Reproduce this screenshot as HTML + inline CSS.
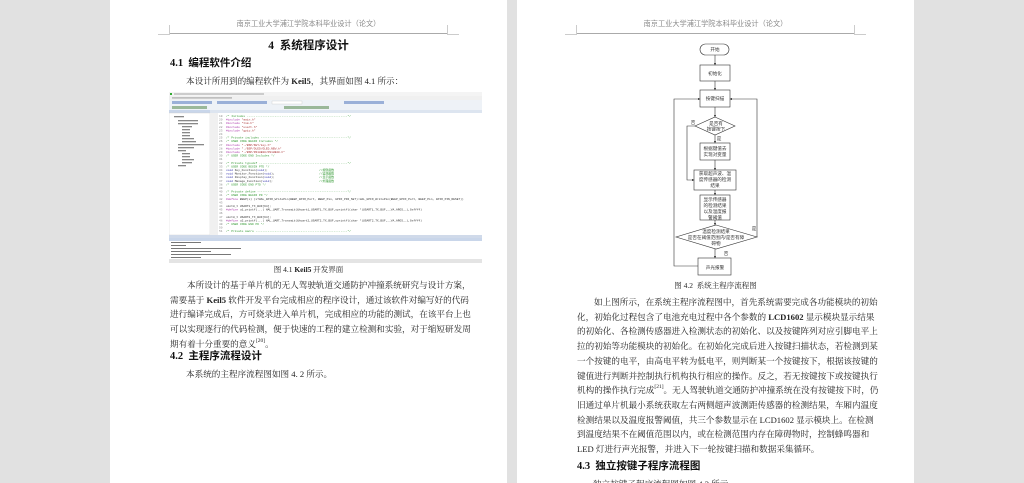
<!DOCTYPE html>
<html><head><meta charset="utf-8"><style>
*{margin:0;padding:0;box-sizing:border-box}
body{width:1024px;height:483px;overflow:hidden;background:#e1e1e1;position:relative;font-family:"Liberation Serif","Noto Serif CJK SC",serif;color:#222}
.page{position:absolute;top:0;width:397px;height:483px;background:#fff;overflow:hidden}
.hd{position:absolute;top:19px;left:60px;width:277px;text-align:center;font-size:7.2px;color:#8a8a8a;font-family:"Liberation Sans","Noto Sans CJK SC",sans-serif}
.hl{position:absolute;top:33px;left:60px;width:277px;height:1px;background:#aaa}
.cm{position:absolute;width:12px;height:10px;border-color:#ccc;border-style:solid;border-width:0}
.t{position:absolute;font-size:9px;line-height:14.7px;color:#222;white-space:nowrap}
.p{position:absolute;left:60px;width:277px;font-size:8.6px;line-height:14.7px;text-align:justify;text-align-last:justify;color:#222}
.p span{display:block;white-space:nowrap}
.b{font-weight:bold;color:#111;font-family:"Liberation Serif","Noto Sans CJK SC",serif}
sup{font-size:5.5px;vertical-align:top;line-height:8px}
</style></head><body>

<div class="page" style="left:110px">
 <div class="hd">南京工业大学浦江学院本科毕业设计（论文）</div>
 <div class="hl"></div>
 <div class="cm" style="left:48px;top:25px;border-right-width:1px;border-bottom-width:1px"></div>
 <div class="cm" style="left:337px;top:25px;border-left-width:1px;border-bottom-width:1px"></div>
 <div class="t b" style="left:0;width:397px;text-align:center;top:39px;font-size:11.5px">4&nbsp; 系统程序设计</div>
 <div class="t b" style="left:60px;top:57px;font-size:10.5px">4.1&nbsp; 编程软件介绍</div>
 <div class="t" style="left:76px;top:74px;font-size:8.6px">本设计所用到的编程软件为 <b>Keil5</b>，其界面如图 4.1 所示：</div>
 <svg style="position:absolute;left:59px;top:92px" width="313" height="171" viewBox="0 0 313 171">
  <rect width="313" height="171" fill="#fff"/>
  <rect x="0" y="0" width="313" height="4" fill="#f4f4f4"/>
  <rect x="1" y="1" width="2" height="2" fill="#3a3"/>
  <rect x="5" y="1.3" width="90" height="1.4" fill="#bbb"/>
  <rect x="0" y="4" width="313" height="4" fill="#f0f0f0"/>
  <g fill="#aaa"><rect x="3" y="5.3" width="60" height="1.2"/></g>
  <rect x="0" y="8" width="313" height="5" fill="#eef2f7"/>
  <g fill="#9ab0d8"><rect x="3" y="9" width="40" height="3"/><rect x="48" y="9" width="50" height="3"/><rect x="175" y="9" width="40" height="3"/></g>
  <rect x="103" y="9" width="30" height="3" fill="#fff" stroke="#bbb" stroke-width=".3"/>
  <rect x="0" y="13" width="313" height="5" fill="#eef2f7"/>
  <g fill="#9ab89a"><rect x="3" y="14" width="35" height="3"/><rect x="115" y="14" width="45" height="3"/></g>
  <rect x="0" y="18" width="41" height="3" fill="#c9d6ea"/>
  <rect x="41" y="18" width="272" height="3" fill="#dde5f0"/>
  <rect x="0" y="21" width="41" height="122" fill="#fff" stroke="#ccc" stroke-width=".4"/>
  <g fill="#888">
   <rect x="5" y="24" width="10" height="1.3"/><rect x="9" y="28" width="20" height="1.3"/><rect x="9" y="31" width="20" height="1.3"/>
   <rect x="13" y="34" width="10" height="1.3"/><rect x="13" y="37" width="8" height="1.3"/><rect x="13" y="40" width="8" height="1.3"/><rect x="13" y="43" width="8" height="1.3"/><rect x="13" y="46" width="12" height="1.3"/><rect x="13" y="49" width="14" height="1.3"/>
   <rect x="9" y="52" width="26" height="1.3"/><rect x="9" y="55" width="16" height="1.3"/><rect x="9" y="58" width="8" height="1.3"/>
   <rect x="13" y="61" width="8" height="1.3"/><rect x="13" y="64" width="8" height="1.3"/><rect x="13" y="67" width="12" height="1.3"/><rect x="13" y="70" width="10" height="1.3"/><rect x="9" y="73" width="8" height="1.3"/>
  </g>
  <rect x="41" y="21" width="8" height="122" fill="#f0f0f0"/>
  <g font-family="Liberation Mono" font-size="2.9" >
   <g fill="#888">
    <text x="50" y="25">19</text><text x="50" y="28.6">20</text><text x="50" y="32.2">21</text><text x="50" y="35.8">22</text><text x="50" y="39.4">23</text><text x="50" y="43">24</text><text x="50" y="46.6">25</text><text x="50" y="50.2">26</text><text x="50" y="53.8">27</text><text x="50" y="57.4">28</text><text x="50" y="61">29</text><text x="50" y="64.6">30</text><text x="50" y="68.2">31</text><text x="50" y="71.8">32</text><text x="50" y="75.4">33</text><text x="50" y="79">34</text><text x="50" y="82.6">35</text><text x="50" y="86.2">36</text><text x="50" y="89.8">37</text><text x="50" y="93.4">38</text><text x="50" y="97">39</text><text x="50" y="100.6">40</text><text x="50" y="104.2">41</text><text x="50" y="107.8">42</text><text x="50" y="111.4">43</text><text x="50" y="115">44</text><text x="50" y="118.6">45</text><text x="50" y="122.2">46</text><text x="50" y="125.8">47</text><text x="50" y="129.4">48</text><text x="50" y="133">49</text><text x="50" y="136.6">50</text><text x="50" y="140.2">51</text>
   </g>
   <text x="57" y="25" fill="#393">/* Includes ----------------------------------------------------------*/</text>
   <text x="57" y="28.6" fill="#a3a">#include <tspan fill="#a33">"main.h"</tspan></text>
   <text x="57" y="32.2" fill="#a3a">#include <tspan fill="#a33">"tim.h"</tspan></text>
   <text x="57" y="35.8" fill="#a3a">#include <tspan fill="#a33">"usart.h"</tspan></text>
   <text x="57" y="39.4" fill="#a3a">#include <tspan fill="#a33">"gpio.h"</tspan></text>
   <text x="57" y="46.6" fill="#393">/* Private includes --------------------------------------------------*/</text>
   <text x="57" y="50.2" fill="#393">/* USER CODE BEGIN Includes */</text>
   <text x="57" y="53.8" fill="#a3a">#include <tspan fill="#a33">"./BSP/KEY/key.h"</tspan></text>
   <text x="57" y="57.4" fill="#a3a">#include <tspan fill="#a33">"./BSP/OLED/OLED_NEW.h"</tspan></text>
   <text x="57" y="61" fill="#a3a">#include <tspan fill="#a33">"./BSP/DS18B20/DS18B20.h"</tspan></text>
   <text x="57" y="64.6" fill="#393">/* USER CODE END Includes */</text>
   <text x="57" y="71.8" fill="#393">/* Private typedef ---------------------------------------------------*/</text>
   <text x="57" y="75.4" fill="#393">/* USER CODE BEGIN PTD */</text>
   <text x="57" y="79" fill="#33a">void <tspan fill="#333">Key_Function(</tspan>void<tspan fill="#333">);</tspan><tspan fill="#393" x="150">//按键函数</tspan></text>
   <text x="57" y="82.6" fill="#33a">void <tspan fill="#333">Monitor_Function(</tspan>void<tspan fill="#333">);</tspan><tspan fill="#393" x="150">//监测函数</tspan></text>
   <text x="57" y="86.2" fill="#33a">void <tspan fill="#333">Display_Function(</tspan>void<tspan fill="#333">);</tspan><tspan fill="#393" x="150">//显示函数</tspan></text>
   <text x="57" y="89.8" fill="#33a">void <tspan fill="#333">Manage_Function(</tspan>void<tspan fill="#333">);</tspan><tspan fill="#393" x="150">//处理函数</tspan></text>
   <text x="57" y="93.4" fill="#393">/* USER CODE END PTD */</text>
   <text x="57" y="100.6" fill="#393">/* Private define ----------------------------------------------------*/</text>
   <text x="57" y="104.2" fill="#393">/* USER CODE BEGIN PD */</text>
   <text x="57" y="107.8" fill="#a3a">#define <tspan fill="#333">BEEP(x)  (x?HAL_GPIO_WritePin(BEEP_GPIO_Port, BEEP_Pin, GPIO_PIN_SET):HAL_GPIO_WritePin(BEEP_GPIO_Port, BEEP_Pin, GPIO_PIN_RESET))</tspan></text>
   <text x="57" y="115" fill="#333">uint8_t USART1_TX_BUF[64];</text>
   <text x="57" y="118.6" fill="#a3a">#define <tspan fill="#333">u1_printf(...)  HAL_UART_Transmit(&amp;huart1,USART1_TX_BUF,sprintf((char *)USART1_TX_BUF,__VA_ARGS__),0xffff)</tspan></text>
   <text x="57" y="125.8" fill="#333">uint8_t USART2_TX_BUF[64];</text>
   <text x="57" y="129.4" fill="#a3a">#define <tspan fill="#333">u2_printf(...)  HAL_UART_Transmit(&amp;huart2,USART2_TX_BUF,sprintf((char *)USART2_TX_BUF,__VA_ARGS__),0xffff)</tspan></text>
   <text x="57" y="133" fill="#393">/* USER CODE END PD */</text>
   <text x="57" y="140.2" fill="#393">/* Private macro -----------------------------------------------------*/</text>
  </g>
  <rect x="0" y="143" width="313" height="3" fill="#d0daea"/>
  <rect x="0" y="146" width="313" height="3" fill="#c9d6ea"/>
  <g fill="#777"><rect x="2" y="150" width="30" height="1"/><rect x="2" y="153" width="15" height="1"/><rect x="2" y="156" width="70" height="1"/><rect x="2" y="159" width="40" height="1"/><rect x="2" y="162" width="60" height="1"/><rect x="2" y="165" width="30" height="1"/></g>
  <rect x="0" y="167" width="313" height="4" fill="#e4e4e4"/>
 </svg>
 <div class="t" style="left:0;width:397px;text-align:center;top:263px;font-size:7.5px">图 4.1 <b>Keil5</b> 开发界面</div>
 <div class="p" style="top:278px">
  <span style="text-indent:17px">本所设计的基于单片机的无人驾驶轨道交通防护冲撞系统研究与设计方案，</span>
  <span>需要基于 <b>Keil5</b> 软件开发平台完成相应的程序设计，通过该软件对编写好的代码</span>
  <span>进行编译完成后，方可烧录进入单片机，完成相应的功能的测试，在该平台上也</span>
  <span>可以实现逐行的代码检测，便于快速的工程的建立检测和实验，对于缩短研发周</span>
  <span style="text-align-last:left">期有着十分重要的意义<sup>[20]</sup>。</span>
 </div>
 <div class="t b" style="left:60px;top:350px;font-size:10.5px">4.2&nbsp; 主程序流程设计</div>
 <div class="t" style="left:76px;top:367px;font-size:8.6px">本系统的主程序流程图如图 4. 2 所示。</div>
</div>

<div class="page" style="left:517px">
 <div class="hd">南京工业大学浦江学院本科毕业设计（论文）</div>
 <div class="hl"></div>
 <div class="cm" style="left:48px;top:25px;border-right-width:1px;border-bottom-width:1px"></div>
 <div class="cm" style="left:337px;top:25px;border-left-width:1px;border-bottom-width:1px"></div>
 <svg style="position:absolute;left:0;top:0" width="397" height="283" viewBox="517 0 397 283" font-family="Liberation Sans, Noto Sans CJK SC, sans-serif" font-size="4.6" text-anchor="middle">
  <defs><marker id="a" markerWidth="4" markerHeight="4" refX="3.5" refY="2" orient="auto"><path d="M0,0 L4,2 L0,4 z" fill="#333"/></marker></defs>
  <g fill="none" stroke="#333" stroke-width=".6">
   <rect x="700" y="44" width="29" height="11" rx="5.5"/>
   <rect x="700" y="65" width="30" height="16"/>
   <rect x="700" y="90" width="30" height="17"/>
   <path d="M715,117 L735,126 L715,135 L695,126 Z"/>
   <rect x="700" y="143" width="30" height="17"/>
   <rect x="694" y="170" width="42" height="20"/>
   <rect x="700" y="195" width="30" height="25"/>
   <path d="M716,225 L757,237 L716,249 L676,237 Z"/>
   <rect x="698" y="258" width="33" height="17"/>
   <path d="M715,55 V65" marker-end="url(#a)"/>
   <path d="M715,81 V90" marker-end="url(#a)"/>
   <path d="M715,107 V117" marker-end="url(#a)"/>
   <path d="M715,135 V143" marker-end="url(#a)"/>
   <path d="M715,160 V170" marker-end="url(#a)"/>
   <path d="M715,190 V195" marker-end="url(#a)"/>
   <path d="M715,220 V225" marker-end="url(#a)"/>
   <path d="M715,249 V258" marker-end="url(#a)"/>
   <path d="M698,266 H674 V99 H700" marker-end="url(#a)"/>
   <path d="M757,237 V99 H730" marker-end="url(#a)"/>
   <path d="M695,126 H687 V180 H694" marker-end="url(#a)"/>
  </g>
  <g fill="#333">
   <text x="715" y="51">开始</text>
   <text x="715" y="75">初始化</text>
   <text x="715" y="100">按键扫描</text>
   <text x="716" y="125">是否有</text><text x="716" y="130.5">按键按下</text>
   <text x="715" y="150">根据键值去</text><text x="715" y="156">实现对变量</text>
   <text x="715" y="175">获取超声波、温</text><text x="715" y="181">度传感器的检测</text><text x="715" y="187">结果</text>
   <text x="715" y="201">显示传感器</text><text x="715" y="207">的检测结果</text><text x="715" y="213">以及温度报</text><text x="715" y="219">警阈值</text>
   <text x="716" y="233">温度检测结果</text><text x="716" y="239">是否在阈值范围内/是否有障</text><text x="716" y="245">碍物</text>
   <text x="715" y="269">声光报警</text>
   <text x="693" y="124">否</text><text x="719" y="140">是</text><text x="754" y="230">是</text><text x="726" y="255">否</text>
  </g>
 </svg>
 <div class="t" style="left:0;width:397px;text-align:center;top:279px;font-size:7.5px">图 4.2&nbsp; 系统主程序流程图</div>
 <div class="p" style="top:295px">
  <span style="text-indent:17px">如上图所示，在系统主程序流程图中，首先系统需要完成各功能模块的初始</span>
  <span>化，初始化过程包含了电池充电过程中各个参数的 <b>LCD1602</b> 显示模块显示结果</span>
  <span>的初始化、各检测传感器进入检测状态的初始化、以及按键阵列对应引脚电平上</span>
  <span>拉的初始等功能模块的初始化。在初始化完成后进入按键扫描状态，若检测到某</span>
  <span>一个按键的电平，由高电平转为低电平，则判断某一个按键按下，根据该按键的</span>
  <span>键值进行判断并控制执行机构执行相应的操作。反之，若无按键按下或按键执行</span>
  <span>机构的操作执行完成<sup>[21]</sup>。无人驾驶轨道交通防护冲撞系统在没有按键按下时，仍</span>
  <span>旧通过单片机最小系统获取左右两侧超声波测距传感器的检测结果，车厢内温度</span>
  <span>检测结果以及温度报警阈值，共三个参数显示在 LCD1602 显示模块上。在检测</span>
  <span>到温度结果不在阈值范围以内，或在检测范围内存在障碍物时，控制蜂鸣器和</span>
  <span style="text-align-last:left">LED 灯进行声光报警，并进入下一轮按键扫描和数据采集循环。</span>
 </div>
 <div class="t b" style="left:60px;top:460px;font-size:10.5px">4.3&nbsp; 独立按键子程序流程图</div>
 <div class="t" style="left:76px;top:477px;font-size:8.6px">独立按键子程序流程图如图 4.3 所示。</div>
</div>
</body></html>
